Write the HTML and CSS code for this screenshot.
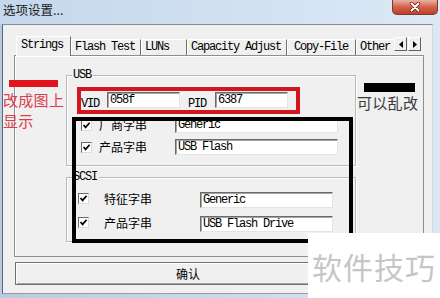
FILE: index.html
```html
<!DOCTYPE html>
<html lang="zh">
<head>
    <meta charset="UTF-8">
    <title>选项设置</title>
    <link rel="stylesheet" href="styles.css">
</head>
<body>
    <!-- 窗口 -->
    <div class="window">
        <div class="titlebar">
            <span class="title">选项设置...</span>
            <button class="close">
                <svg width="14" height="10" viewBox="0 0 14 10">
                    <path d="M3.5 1.5 L10.5 8.5 M10.5 1.5 L3.5 8.5" stroke="#6b2a20" stroke-width="3.4" stroke-linecap="round"/>
                    <path d="M3.5 1.5 L10.5 8.5 M10.5 1.5 L3.5 8.5" stroke="#fff" stroke-width="1.8" stroke-linecap="round"/>
                </svg>
            </button>
        </div>

        <div class="client">
            <!-- 标签页 -->
            <div class="tabstrip">
                <div class="tabs">
                    <div class="tab tab-active">Strings</div>
                    <div class="tab">Flash Test</div>
                    <div class="tab tab-short">LUNs</div>
                    <div class="tab">Capacity Adjust</div>
                    <div class="tab tab-wide">Copy-File</div>
                    <div class="tab">Other</div>
                    <div class="tab">Build</div>
                </div>
                <div class="scroll">
                    <span class="scroll-btn">
                        <svg width="4" height="7" viewBox="0 0 4 7"><path d="M4 0 L0 3.5 L4 7 Z" fill="#000"/></svg>
                    </span>
                    <span class="scroll-btn">
                        <svg width="4" height="7" viewBox="0 0 4 7"><path d="M0 0 L4 3.5 L0 7 Z" fill="#000"/></svg>
                    </span>
                </div>
            </div>

            <div class="panel">
                <!-- USB -->
                <div class="group group-usb">
                    <span class="group-title">USB</span>
                    <div class="id-row">
                        <span class="id-label">VID</span>
                        <input class="field id-field" type="text" value="058f" readonly>
                        <span class="id-label id-label-pid">PID</span>
                        <input class="field id-field" type="text" value="6387" readonly>
                    </div>
                    <div class="str-row">
                        <span class="check"><svg width="9" height="9" viewBox="0 0 9 9"><path d="M1.5 4 L3.6 6.4 L7.6 1.8" fill="none" stroke="#000" stroke-width="1.7"/></svg></span>
                        <span class="str-label">厂商字串</span>
                        <input class="field str-field" type="text" value="Generic" readonly>
                    </div>
                    <div class="str-row">
                        <span class="check"><svg width="9" height="9" viewBox="0 0 9 9"><path d="M1.5 4 L3.6 6.4 L7.6 1.8" fill="none" stroke="#000" stroke-width="1.7"/></svg></span>
                        <span class="str-label">产品字串</span>
                        <input class="field str-field" type="text" value="USB Flash" readonly>
                    </div>
                </div>

                <!-- SCSI -->
                <div class="group group-scsi">
                    <span class="group-title">SCSI</span>
                    <div class="str-row">
                        <span class="check"><svg width="9" height="9" viewBox="0 0 9 9"><path d="M1.5 4 L3.6 6.4 L7.6 1.8" fill="none" stroke="#000" stroke-width="1.7"/></svg></span>
                        <span class="str-label">特征字串</span>
                        <input class="field str-field" type="text" value="Generic" readonly>
                    </div>
                    <div class="str-row">
                        <span class="check"><svg width="9" height="9" viewBox="0 0 9 9"><path d="M1.5 4 L3.6 6.4 L7.6 1.8" fill="none" stroke="#000" stroke-width="1.7"/></svg></span>
                        <span class="str-label">产品字串</span>
                        <input class="field str-field" type="text" value="USB Flash Drive" readonly>
                    </div>
                </div>
            </div>

            <button class="ok">确认</button>
        </div>
    </div>

    <!-- 标注 -->
    <div class="mark mark-red"></div>
    <div class="mark mark-black"></div>
    <div class="note note-left"><span class="note-bar"></span>改成图上<br>显示</div>
    <div class="note note-right"><span class="note-bar"></span>可以乱改</div>
    <div class="watermark">软件技巧</div>
</body>
</html>
```

FILE: styles.css
```css
body {
    margin: 0;
    width: 440px;
    height: 298px;
    overflow: hidden;
    position: relative;
    background: linear-gradient(90deg, #b7cce3, #dbe7f4);
    font-family: "Noto Sans CJK SC", sans-serif;
    font-size: 12px;
    color: #000;
}

/* 标题栏 */
.titlebar {
    height: 24px;
    display: flex;
    align-items: flex-start;
    background: linear-gradient(90deg, #c4d7ec, #dce9f6);
}
.title {
    padding: 2px 0 0 3px;
    font-size: 12.5px;
    line-height: 16px;
    color: #1b1b1b;
}
.close {
    margin: 0 2px 0 auto;
    width: 46px;
    height: 15px;
    padding: 0;
    border: 1px solid #7b3a2e;
    border-top: none;
    border-radius: 0 0 5px 5px;
    background: linear-gradient(#eab1a3, #d3624c 50%, #c23f27);
    display: flex;
    align-items: center;
    justify-content: center;
}

/* 客户区 */
.client {
    margin: 0 7px 0 2px;
    height: 270px;
    box-sizing: border-box;
    border: 1px solid;
    border-color: #8d8d8d #d6d6d6 #9a9a9a #5b6574;
    background: #f0f0f0;
    padding: 11px 8px 0 11px;
}

/* 标签页 */
.tabstrip {
    display: flex;
    height: 19px;
    position: relative;
    z-index: 1;
}
.tabs {
    flex: 1;
    min-width: 0;
    margin-left: 2px;
    display: flex;
    align-items: flex-end;
    clip-path: inset(-4px 0 -4px 0);
}
.tab {
    flex-shrink: 0;
    height: 16px;
    box-sizing: border-box;
    padding: 0 5px 0 3px;
    border-top: 1px solid #fff;
    border-left: 1px solid #fff;
    border-right: 1px solid #6f6f6f;
    background: #f0f0f0;
    font-family: "Liberation Mono", monospace;
    font-size: 12px;
    letter-spacing: -1.2px;
    line-height: 15px;
    white-space: nowrap;
}
.tab-active {
    height: 20px;
    margin-bottom: -1px;
    padding: 0 7px 2px 4px;
    line-height: 17px;
}
.tab-short {
    min-width: 46px;
}
.tab-wide {
    padding: 0 7px 0 6px;
}
.scroll {
    display: flex;
    gap: 1px;
    margin: 1px 3px 0 0;
    align-self: flex-start;
}
.scroll-btn {
    width: 13px;
    height: 14px;
    box-sizing: border-box;
    border: 1px solid;
    border-color: #fff #5f5f5f #5f5f5f #fff;
    background: #f0f0f0;
    display: flex;
    align-items: center;
    justify-content: center;
}

/* 面板 */
.panel {
    width: 410px;
    height: 202px;
    box-sizing: border-box;
    border: 1px solid #8e8e8e;
    box-shadow: inset 1px 1px #fff;
    background: #f0f0f0;
    padding: 19px 0 0 51px;
}

.group {
    position: relative;
    width: 290px;
    box-sizing: border-box;
    border: 1px solid #b9b9b9;
    box-shadow: 1px 1px 0 #fff, inset 1px 1px 0 #fff;
}
.group-usb {
    padding: 16px 0 10px 14px;
}
.group-scsi {
    margin-top: 11px;
    padding: 14px 0 9px 11px;
}
.group-title {
    position: absolute;
    top: -7px;
    left: 5px;
    padding: 0 2px 0 1px;
    background: #f0f0f0;
    font-family: "Liberation Mono", monospace;
    font-size: 12px;
    letter-spacing: -1.2px;
    line-height: 12px;
}

.id-row {
    display: flex;
    align-items: flex-end;
}
.id-label {
    width: 18px;
    margin: 0 8px -2px 0;
    font-family: "Liberation Mono", monospace;
    font-size: 12px;
    letter-spacing: -1.2px;
    line-height: 11px;
}
.id-label-pid {
    margin: 0 9px -2px 8px;
}

.field {
    height: 16px;
    box-sizing: border-box;
    margin: 0;
    padding: 0 0 0 2px;
    border: 1px solid;
    border-color: #6a6a6a #e4e4e4 #e4e4e4 #6a6a6a;
    box-shadow: inset 1px 1px #a4a4a4;
    background: #fff;
    font-family: "Liberation Mono", monospace;
    font-size: 12px;
    letter-spacing: -1.2px;
    color: #000;
    outline: none;
}
.id-field {
    width: 73px;
}

.str-row {
    display: flex;
    align-items: center;
    margin-top: 6px;
}
.id-row + .str-row {
    margin-top: 9px;
}
.group-scsi .str-row {
    margin-top: 8px;
}
.group-scsi .str-row:first-of-type {
    margin-top: 0;
}
.check {
    flex-shrink: 0;
    width: 11px;
    height: 11px;
    box-sizing: border-box;
    margin-right: 7px;
    border: 1px solid;
    border-color: #6a6a6a #dcdcdc #dcdcdc #6a6a6a;
    background: #fff;
    display: flex;
    align-items: center;
    justify-content: center;
}
.str-label {
    width: 76px;
    line-height: 16px;
    font-size: 12px;
}
.str-field {
    width: 163px;
}
.group-scsi .check {
    margin: -3px 15px 0 0;
}
.group-scsi .str-label {
    width: 96px;
    margin-top: -3px;
}
.group-scsi .str-field {
    width: 133px;
}

/* 确认按钮 */
.ok {
    display: block;
    margin: 5px 0 0 1px;
    width: 346px;
    height: 23px;
    box-sizing: border-box;
    padding: 0;
    border: 1px solid #707070;
    box-shadow: inset 1px 1px #fff, inset -1px -1px #a3a3a3;
    background: #f0f0f0;
    font-family: "Noto Sans CJK SC", sans-serif;
    font-size: 12px;
    color: #000;
}

/* 标注 */
.mark {
    position: absolute;
    box-sizing: border-box;
}
.mark-red {
    left: 77px;
    top: 87px;
    width: 223px;
    height: 27px;
    border: 4px solid #d2161b;
}
.mark-black {
    left: 72px;
    top: 117px;
    width: 281px;
    height: 126px;
    border: 4px solid #000;
}
.note {
    position: absolute;
    font-size: 15px;
    line-height: 21px;
}
.note-left {
    left: 3px;
    top: 80px;
    color: #d8404c;
    letter-spacing: 0.3px;
}
.note-left .note-bar {
    display: block;
    width: 49px;
    height: 7px;
    margin: 0 0 2px 6px;
    background: #e0141c;
}
.note-right {
    left: 357px;
    top: 83px;
    color: #3a3a3a;
    line-height: 18px;
    letter-spacing: 0.3px;
}
.note-right .note-bar {
    display: block;
    width: 51px;
    height: 9px;
    margin: 0 0 2px 7px;
    background: #000;
}
.watermark {
    position: absolute;
    left: 308px;
    top: 233px;
    width: 132px;
    height: 65px;
    box-sizing: border-box;
    padding-left: 4px;
    display: flex;
    align-items: center;
    background: #fff;
    color: #c6c6c6;
    font-size: 30px;
    letter-spacing: 1px;
}
```
